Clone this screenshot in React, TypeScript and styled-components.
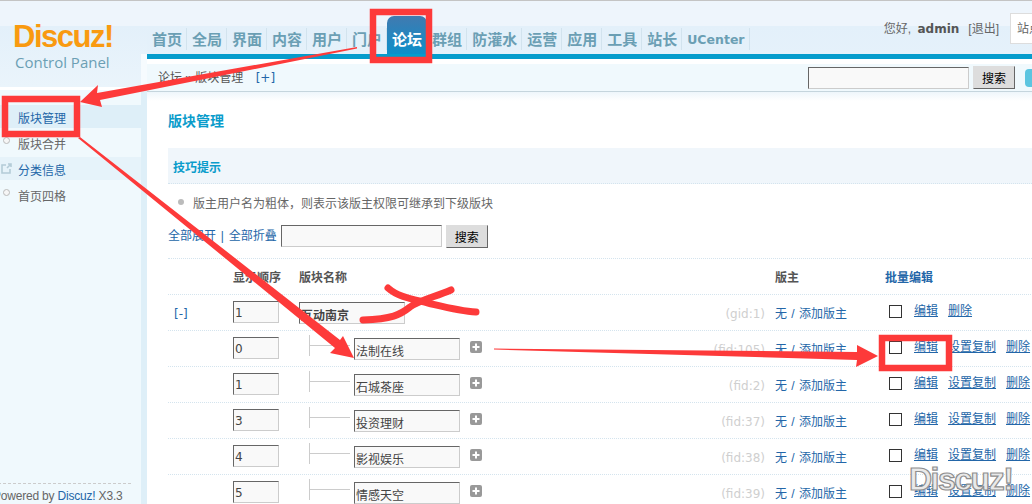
import { createGlobalStyle } from "styled-components";
import styled from "styled-components";

const cjk = `"Liberation Sans", "Noto Sans CJK SC", sans-serif`;
const wide = `"DejaVu Sans", "Noto Sans CJK SC", sans-serif`;

const Global = createGlobalStyle`
  html, body { margin: 0; padding: 0; background: #fff; }
  body { font: 12px/1.5 ${cjk}; color: #666; }
  * { box-sizing: border-box; }
`;

const Page = styled.div`
  position: relative;
  display: flex;
  width: 1032px;
  height: 504px;
  overflow: hidden;
  border-top: 1px solid #c4c4c4;
`;

/* left column */
const Side = styled.aside`
  display: flex;
  flex-direction: column;
  flex: 0 0 147px;
  height: 503px;
`;
const LogoBox = styled.div`
  position: relative;
  height: 86px;
  padding: 17px 0 0 13px;
  background: linear-gradient(#eef5fc 0, #eef5fc 25px, #e3f0fa 25px, #eaf4fb 86px);
  &::after {
    content: "";
    position: absolute;
    top: 53px;
    right: 0;
    bottom: 0;
    width: 6px;
    background: #f6fbfe;
  }
`;
const LogoMark = styled.div`
  margin-bottom: -3px;
  font: bold 31px/38px "Liberation Sans", sans-serif;
  color: #f99a10;
  letter-spacing: -1.5px;
`;
const LogoSub = styled.div`
  margin: 0 0 0 2px;
  font: 15px/18px "Open Sans", sans-serif;
  color: #6b9fb4;
`;
const Menu = styled.nav`
  flex: 1;
  display: flex;
  flex-direction: column;
  margin-top: 3px;
  background: #f0f9fd;
  border-right: 6px solid #deeff8;
`;
const MenuList = styled.div`
  flex: 1;
  padding-top: 15px;
`;
const MenuItem = styled.div<{ $on?: boolean; $tint?: string }>`
  position: relative;
  height: 23px;
  margin-bottom: 3px;
  padding: 4px 0 0 18px;
  line-height: 20px;
  background: ${(p) => p.$tint || "transparent"};
  color: ${(p) => (p.$on ? "#2366a8" : "#666")};
`;
const Dot = styled.i`
  position: absolute;
  left: 3px;
  top: 6px;
  width: 7px;
  height: 7px;
  border: 1px solid #bbb;
  border-radius: 50%;
  background: #f6f6f6;
`;
const LinkIcon = styled.svg`
  position: absolute;
  left: 1px;
  top: 6px;
`;
const SideFoot = styled.div`
  height: 21px;
  margin: 0 10px 0 -7px;
  border-top: 1px dashed #ccc;
  font: 12px/25px "Liberation Sans", sans-serif;
  letter-spacing: -0.2px;
  white-space: nowrap;
  color: #666;
  a { color: #2366a8; }
`;

/* main column */
const Main = styled.main`
  flex: 1;
  min-width: 0;
`;
const TopBar = styled.header`
  display: flex;
  justify-content: space-between;
  height: 58px;
  background: linear-gradient(#eef5fc 0, #eef5fc 25px, #e3f0fa 25px, #e5f1fa 53px);
  border-bottom: 5px solid #059ccc;
`;
const Tabs = styled.div`
  display: flex;
  padding-top: 15px;
`;
const Tab = styled.div<{ $on?: boolean; $latin?: boolean }>`
  position: relative;
  height: 38px;
  padding: 0 5px;
  font-weight: bold;
  font-size: ${(p) => (p.$latin ? "12.5px" : "15px")};
  line-height: 47px;
  font-family: ${(p) => (p.$latin ? wide : cjk)};
  color: ${(p) => (p.$on ? "#fff" : "#6b9fb4")};
  white-space: nowrap;
  border-radius: ${(p) => (p.$on ? "7px 7px 0 0" : "0")};
  background: ${(p) => (p.$on ? "linear-gradient(#417ab0, #0d8fc9)" : "none")};
  &::after {
    content: "";
    position: absolute;
    right: 0;
    top: 12px;
    bottom: 4px;
    width: 1px;
    background: ${(p) => (p.$on ? "none" : "#d2e3ee")};
  }
`;
const Who = styled.div`
  display: flex;
  align-items: flex-start;
  gap: 11px;
  padding-top: 12px;
  color: #666;
  white-space: nowrap;
`;
const Hello = styled.span`
  margin-top: 7px;
  b { margin: 0 9px 0 3px; font: bold 12px ${wide}; color: #555; }
`;
const Site = styled.div`
  width: 22px;
  height: 31px;
  overflow: hidden;
  border: 1px solid #ddd;
  border-right: 0;
  background: #fff;
  padding: 6px 0 0 6px;
  white-space: nowrap;
`;
const Crumb = styled.div`
  display: flex;
  align-items: center;
  justify-content: space-between;
  height: 28px;
  margin-top: 5px;
  padding: 0 0 0 11px;
  background: #f0f9fd;
  border-bottom: 1px solid #c5d5dd;
  color: #555;
  a { margin-left: 9px; font: 12px ${wide}; color: #2366a8; }
`;
const Find = styled.div`
  display: flex;
  align-items: center;
  gap: 4px;
`;
const QuickIcon = styled.i`
  display: block;
  width: 18px;
  height: 18px;
  margin: 0 -11px 0 6px;
  border-radius: 4px;
  background: #5cc5e0;
`;
const Field = styled.input<{ $w: number; $bold?: boolean }>`
  display: block;
  width: ${(p) => p.$w}px;
  height: 22px;
  padding: 2px 1px 0;
  border: 1px solid;
  border-color: #666 #ccc #ccc #666;
  background: #f9f9f9;
  font: ${(p) => (p.$bold ? "bold" : "normal")} 12px ${wide};
  color: #444;
  outline: 0;
`;
const Go = styled.button`
  width: 42px;
  height: 23px;
  padding: 0;
  border: 1px solid;
  border-color: #ddd #666 #666 #ddd;
  background: #ddd;
  font: 12px ${cjk};
  color: #000;
`;
const Body = styled.div`
  padding: 0 0 0 21px;
  background: linear-gradient(#eef6fb, #fff 9px) no-repeat;
`;
const Title = styled.h3`
  margin: 0;
  padding-top: 19px;
  height: 56px;
  font-size: 14px;
  line-height: 20px;
  color: #0a9ccb;
`;
const TipHead = styled.div`
  height: 36px;
  padding-left: 5px;
  background: #f0f6fb;
  border-bottom: 1px dotted #d4e4ee;
  font-weight: bold;
  line-height: 40px;
  color: #0a9ccb;
`;
const Tip = styled.div`
  position: relative;
  height: 40px;
  padding: 11px 0 0 25px;
  line-height: 18px;
  color: #666;
  &::before {
    content: "";
    position: absolute;
    left: 10px;
    top: 15px;
    width: 6px;
    height: 6px;
    border-radius: 50%;
    background: #bbb;
  }
`;
const Tools = styled.div`
  display: flex;
  align-items: center;
  gap: 4px;
  height: 35px;
  border-bottom: 1px dotted #d4e4ee;
  padding-bottom: 10px;
  color: #2366a8;
  span { word-spacing: 1.5px; }
`;
const Row = styled.div<{ $head?: boolean }>`
  display: grid;
  grid-template-columns: 65px 66px 476px 110px 160px;
  height: 36px;
  width: 877px;
  border-bottom: 1px dotted #d4e4ee;
  font-weight: ${(p) => (p.$head ? "bold" : "normal")};
  line-height: ${(p) => (p.$head ? "38px" : "18px")};
  color: ${(p) => (p.$head ? "#555" : "#666")};
`;
const Fold = styled.a`
  padding: 10px 0 0 6px;
  font-family: ${wide};
  color: #2366a8;
`;
const Order = styled.div`
  padding-top: 6px;
`;
const NameCell = styled.div`
  display: flex;
  align-items: flex-start;
`;
const Branch = styled.i`
  display: block;
  flex: 0 0 41px;
  height: 21px;
  margin: 4px 4px 0 10px;
  border-left: 1px solid #ccc;
  background: linear-gradient(#ccc, #ccc) no-repeat 0 10px / 100% 1px;
`;
const NameBox = styled.div`
  padding-top: 7px;
`;
const Plus = styled.svg`
  margin: 10px 0 0 10px;
  flex: none;
`;
const FidTag = styled.span`
  margin-left: auto;
  padding: 10px 10px 0 0;
  font: 12px/18px ${wide};
  color: #cfcfcf;
`;
const Mods = styled.div`
  padding-top: 10px;
  word-spacing: 1px;
  color: #2366a8;
  white-space: nowrap;
`;
const Acts = styled.div<{ $head?: boolean }>`
  display: flex;
  align-items: flex-start;
  gap: 10px;
  color: #2366a8;
  white-space: nowrap;
  ${(p) => (p.$head ? "" : "padding: 7px 0 0 4px;")}
  a { text-decoration: underline; }
`;
const Tick = styled.i`
  display: block;
  width: 13px;
  height: 13px;
  margin: 3px 2px 0 0;
  border: 1px solid #333;
  background: #fff;
`;

/* hand-drawn notes and stamp lying over the page */
const Notes = styled.svg`
  position: absolute;
  left: 0;
  top: -1px;
  pointer-events: none;
`;
const Stamp = styled.div`
  position: absolute;
  left: 909px;
  top: 459px;
  font: bold 32px/38px "Liberation Sans", sans-serif;
  letter-spacing: -1.5px;
  color: #e9e9e9;
  -webkit-text-stroke: 1.2px #8f8f8f;
`;

const tabs = ["首页", "全局", "界面", "内容", "用户", "门户", "论坛", "群组", "防灌水", "运营", "应用", "工具", "站长", "UCenter"];
const forums = [
  { order: "0", name: "法制在线", tag: "(fid:105)" },
  { order: "1", name: "石城茶座", tag: "(fid:2)" },
  { order: "3", name: "投资理财", tag: "(fid:37)" },
  { order: "4", name: "影视娱乐", tag: "(fid:38)" },
  { order: "5", name: "情感天空", tag: "(fid:39)" },
];

export default function App() {
  return (
    <>
      <Global />
      <Page>
        <Side>
          <LogoBox>
            <LogoMark>Discuz!</LogoMark>
            <LogoSub>Control Panel</LogoSub>
          </LogoBox>
          <Menu>
            <MenuList>
              <MenuItem $on $tint="#deeff8">版块管理</MenuItem>
              <MenuItem><Dot />版块合并</MenuItem>
              <MenuItem $on $tint="#e6f3fa">
                <LinkIcon width="11" height="11" viewBox="0 0 11 11" fill="none" stroke="#b4ccd8" strokeWidth="1.6">
                  <path d="M5 2H1v8h8V6M6 5l4-4M7 1h3v3" />
                </LinkIcon>
                分类信息
              </MenuItem>
              <MenuItem><Dot />首页四格</MenuItem>
            </MenuList>
            <SideFoot>Powered by <a>Discuz!</a> X3.3</SideFoot>
          </Menu>
        </Side>
        <Main>
          <TopBar>
            <Tabs>
              {tabs.map((t) => (
                <Tab key={t} $on={t === "论坛"} $latin={t === "UCenter"}>{t}</Tab>
              ))}
            </Tabs>
            <Who>
              <Hello>您好, <b>admin</b>[退出]</Hello>
              <Site>站点</Site>
            </Who>
          </TopBar>
          <Crumb>
            <span>论坛 » 版块管理 <a>[+]</a></span>
            <Find>
              <Field $w={161} />
              <Go>搜索</Go>
              <QuickIcon />
            </Find>
          </Crumb>
          <Body>
            <Title>版块管理</Title>
            <TipHead>技巧提示</TipHead>
            <Tip>版主用户名为粗体，则表示该版主权限可继承到下级版块</Tip>
            <Tools>
              <span>全部展开 | 全部折叠</span>
              <Field $w={161} />
              <Go>搜索</Go>
            </Tools>
            <Row $head>
              <span />
              <span>显示顺序</span>
              <span>版块名称</span>
              <span>版主</span>
              <Acts $head>批量编辑</Acts>
            </Row>
            <Row>
              <Fold>[-]</Fold>
              <Order><Field $w={46} defaultValue="1" /></Order>
              <NameCell>
                <NameBox><Field $w={106} $bold defaultValue="互动南京" /></NameBox>
                <FidTag>(gid:1)</FidTag>
              </NameCell>
              <Mods>无 / 添加版主</Mods>
              <Acts><Tick /><a>编辑</a><a>删除</a></Acts>
            </Row>
            {forums.map((f) => (
              <Row key={f.order}>
                <span />
                <Order><Field $w={46} defaultValue={f.order} /></Order>
                <NameCell>
                  <Branch />
                  <NameBox><Field $w={106} defaultValue={f.name} /></NameBox>
                  <Plus width="12" height="12" viewBox="0 0 12 12">
                    <rect width="12" height="12" rx="2" fill="#999" />
                    <path d="M6 2.5v7M2.5 6h7" stroke="#fff" strokeWidth="2" />
                  </Plus>
                  <FidTag>{f.tag}</FidTag>
                </NameCell>
                <Mods>无 / 添加版主</Mods>
                <Acts><Tick /><a>编辑</a><a>设置复制</a><a>删除</a></Acts>
              </Row>
            ))}
          </Body>
        </Main>
        <Notes width="1032" height="504" viewBox="0 0 1032 504">
          <g fill="none" stroke="#fd3a3a" strokeWidth="6.5">
            <rect x="373" y="12" width="56" height="48" />
            <rect x="5" y="99" width="72" height="35" />
            <rect x="882" y="338" width="67" height="30" />
          </g>
          <g fill="#fd3a3a">
            <polygon points="357,47 357,48.5 100,100 102,107 80,102 98,85 97,93" />
            <polygon points="80,137 340,340 343,336 354,358 330,353 335,348 78,138" />
            <polygon points="494,348.5 857,352 857,345 878,356 856,367 857,360 494,349.5" />
          </g>
          <g fill="none" stroke="#fd3a3a" strokeWidth="7" strokeLinecap="round">
            <path d="M388,288 C398,297 412,299 428,303 C445,307 460,311 476,312" />
            <path d="M451,290 C435,297 420,300 410,307 C400,315 392,319 363,320" />
          </g>
        </Notes>
        <Stamp>Discuz!</Stamp>
      </Page>
    </>
  );
}
